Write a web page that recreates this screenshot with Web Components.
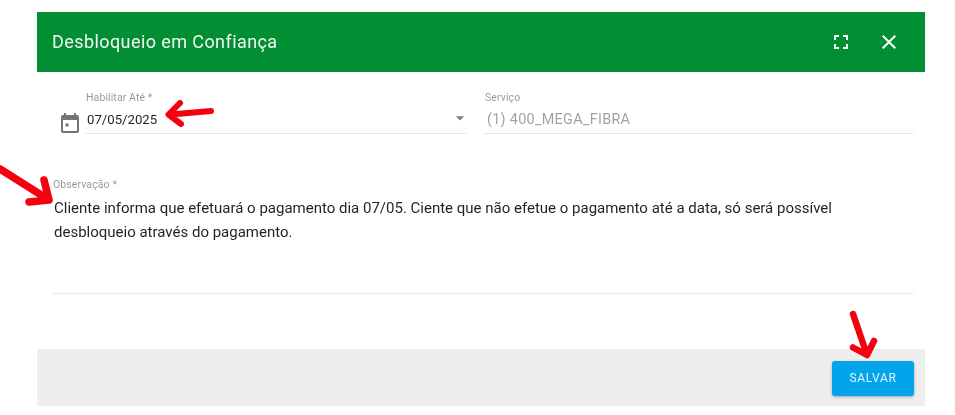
<!DOCTYPE html>
<html lang="pt"><head><meta charset="utf-8"><title>Desbloqueio em Confiança</title>
<style>
html,body{margin:0;background:#fff;height:415px;overflow:hidden}
body{font-family:Roboto,"Liberation Sans",sans-serif;position:relative}
.soft{filter:blur(.5px)}
svg.arrow{position:absolute;left:0;top:0;width:955px;height:415px;pointer-events:none}
</style></head><body>
<template id="t-dialog"><style>
:host{display:flex;flex-direction:column;width:888px;height:394px;margin:12px 0 0 37px;background:#fff}
.main{flex:1;display:flex;flex-direction:column;padding:0 11px 0 15px}
</style>
<slot name="header"></slot><div class="main"><slot></slot></div><slot name="footer"></slot></template>

<template id="t-header"><style>
:host{display:flex;align-items:center;height:60px;background:#028f33;color:#f1f8f3;padding:0 24px 0 15px;flex:none}
h1{flex:1;margin:0;font:400 18px/24px Roboto,sans-serif;letter-spacing:.42px}
.b{display:flex;gap:24.5px;align-items:center}
svg{width:24px;height:24px;fill:#fff;display:block}
</style><h1><slot></slot></h1><div class="b">
<svg viewBox="0 0 24 24"><path d="M7 14H5v5h5v-2H7v-3zm-2-4h2V7h3V5H5v5zm12 7h-3v2h5v-5h-2v3zM14 5v2h3v3h2V5h-5z"/></svg>
<svg viewBox="0 0 24 24"><path d="M19 6.41L17.59 5 12 10.59 6.41 5 5 6.41 10.59 12 5 17.59 6.41 19 12 13.41 17.59 19 19 17.59 13.41 12z"/></svg>
</div></template>

<template id="t-field"><style>
:host{display:block;min-width:0;position:relative;font-family:Roboto,sans-serif}
label{display:block;font-size:10.5px;line-height:14px;color:rgba(0,0,0,.42);letter-spacing:.1px;margin-bottom:3px}
.v{display:block;height:24px;line-height:24px;font-size:13.2px;color:rgba(0,0,0,.87);border-bottom:1px solid #e6e6e6;padding-left:1px;padding-bottom:1px}
:host([disabled]) .v{color:rgba(0,0,0,.38);font-size:14.4px;letter-spacing:.3px;border-bottom:1px dotted #cfcfcf;padding-left:2px}
svg{position:absolute;right:-3.5px;top:16.6px;width:20px;height:20px;fill:rgba(0,0,0,.5)}
</style><label></label><span class="v"><slot></slot></span></template>

<template id="t-row"><style>
:host{display:grid;grid-template-columns:34px 380px 448px;column-gap:0;padding-top:19px}
.i{display:flex;align-items:flex-end}
.i svg{width:24px;height:24px;fill:#757575;margin:0 0 -2px 5.5px;display:block}
::slotted(x-field:last-child){margin-left:19px}
</style><div class="i"><svg viewBox="0 0 24 24"><path d="M19 3h-1V1h-2v2H8V1H6v2H5c-1.11 0-1.99.9-1.99 2L3 19c0 1.1.89 2 2 2h14c1.1 0 2-.9 2-2V5c0-1.1-.9-2-2-2zm0 16H5V8h14v11zM7.5 11.500h3v3h-3z"/></svg></div><slot></slot></template>

<template id="t-note"><style>
:host{display:block;margin-top:44px;height:115px;border-bottom:1px solid #eaeaea;font-family:Roboto,sans-serif}
label{display:block;font-size:10.5px;line-height:14px;color:rgba(0,0,0,.42);letter-spacing:.1px;margin-left:1px}
p{margin:4px 0 0 2px;font-size:15px;line-height:24px;color:rgba(0,0,0,.87);width:800px}
</style><label></label><p><slot></slot></p></template>

<template id="t-footer"><style>
:host{display:flex;justify-content:flex-end;align-items:center;height:57px;background:#eee;padding:0 11px 0 0;flex:none}
</style><slot></slot></template>

<template id="t-button"><style>
:host{display:block}
button{display:block;width:82px;height:35px;margin:1px 0 0;border:0;border-radius:3px;background:#03a4ea;color:#dff4fd;font:400 12px/35px Roboto,sans-serif;letter-spacing:.7px;padding:0;box-shadow:0 1px 3px rgba(0,0,0,.3)}
</style><button><slot></slot></button></template>

<script>
const def=(n,t)=>customElements.define(n,class extends HTMLElement{
  connectedCallback(){ if(this.shadowRoot) return;
    const r=this.attachShadow({mode:"open"});
    r.appendChild(document.getElementById(t).content.cloneNode(true));
    const l=r.querySelector("label"); if(l) l.textContent=this.getAttribute("label")||"";
    if(this.hasAttribute("select")){
      const s=document.createElementNS("http://www.w3.org/2000/svg","svg");
      s.setAttribute("viewBox","0 0 24 24");
      s.innerHTML='<path d="M7 10l5 5 5-5z"/>';
      r.appendChild(s);
    }
  }
});
def("x-dialog","t-dialog");def("x-header","t-header");def("x-field","t-field");
def("x-row","t-row");def("x-note","t-note");def("x-footer","t-footer");def("x-button","t-button");
</script>

<div class="soft">
<x-dialog>
  <x-header slot="header">Desbloqueio em Confiança</x-header>
  <x-row>
    <x-field label="Habilitar Até *" select>07/05/2025</x-field>
    <x-field label="Serviço" disabled>(1) 400_MEGA_FIBRA</x-field>
  </x-row>
  <x-note label="Observação *">Cliente informa que efetuará o pagamento dia 07/05. Ciente que não efetue o pagamento até a data, só será possível desbloqueio através do pagamento.</x-note>
  <x-footer slot="footer"><x-button>SALVAR</x-button></x-footer>
</x-dialog>
</div>
<svg class="arrow soft" viewBox="0 0 955 415" fill="none" stroke="#f5000f" stroke-linecap="round" stroke-linejoin="round">
  <path stroke-width="6" d="M211 111 L171 114.500M180 103 L168.500 114.500 L181 124"/>
  <path stroke-width="7.500" d="M0 169 L46 198M44 180 L49 200 L29 202"/>
  <path stroke-width="6.500" d="M853 314 L866 352M853 347.500 L867 355 L874 341"/>
</svg>
</body></html>
